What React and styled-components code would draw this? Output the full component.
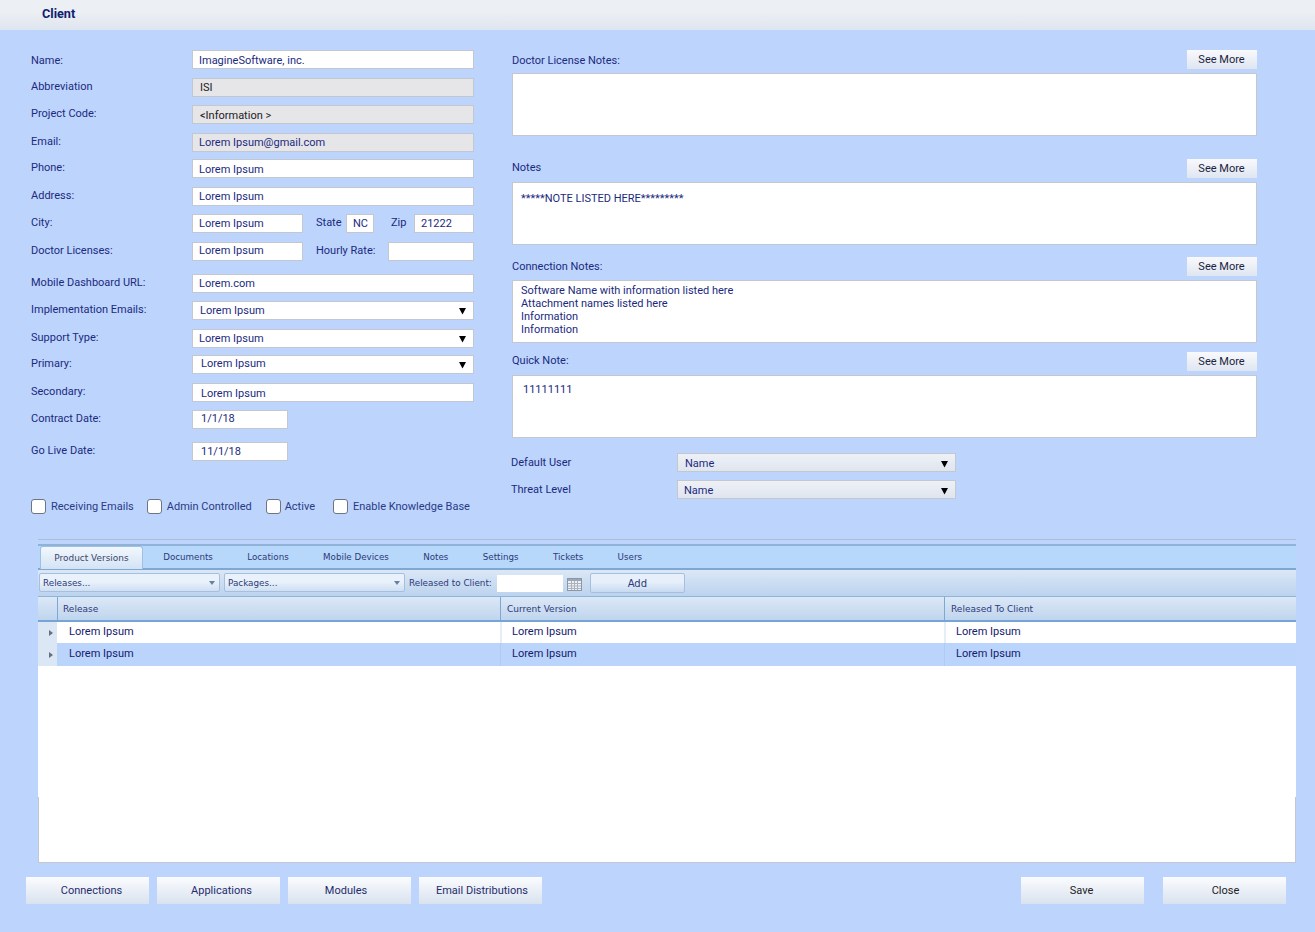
import React from 'react';
import styled, {createGlobalStyle} from 'styled-components';

const GlobalStyle = createGlobalStyle`
  html, body {
    margin: 0;
    padding: 0;
    background: #bdd4fd;
  }
  * {
    box-sizing: border-box;
  }
`;

const navy = '#1b2a7e';
const line = '#c3c7cf';

// shifts centered text up by the given number of pixels
const riseTop = (n = 0) => (n === 0 ? '1px' : '0');
const riseBottom = (n = 0) => (n === 0 ? '0' : `${2 * n - 1}px`);

const Page = styled.div`
  width: 1315px;
  height: 932px;
  overflow: hidden;
  background: #bdd4fd;
  font-family: Roboto, 'Liberation Sans', sans-serif;
  font-size: 11px;
  color: ${navy};
`;

const Header = styled.header`
  height: 30px;
  padding: 6px 0 0 42px;
  background: linear-gradient(#eceff3 0%, #eceff3 40%, #dfe6f0 100%);
  font-size: 12.7px;
  font-weight: 700;
  line-height: 15px;
  color: #101f70;
`;

const Columns = styled.div`
  display: flex;
  gap: 38px;
  padding: 20px 0 0 31px;
`;

const LeftColumn = styled.section`
  width: 443px;
`;

const RightColumn = styled.section`
  width: 745px;
`;

const FormRow = styled.div`
  display: flex;
  align-items: flex-start;
  height: 19px;
  margin-top: ${(p) => p.$top || 0}px;
`;

const Label = styled.label`
  flex: none;
  width: ${(p) => p.$width || 161}px;
  margin-top: ${(p) => p.$dy || 0}px;
  margin-left: ${(p) => p.$left || 0}px;
  line-height: 19px;
  white-space: nowrap;
`;

const Input = styled.input`
  display: block;
  flex: none;
  width: ${(p) => p.$width || 282}px;
  height: 19px;
  margin: 0;
  padding: ${(p) => riseTop(p.$rise)} 0 ${(p) => riseBottom(p.$rise)} ${(p) => p.$pad || 6}px;
  border: 1px solid ${line};
  border-radius: 0;
  background: ${(p) => (p.$disabled ? '#e6e5e8' : '#fff')};
  font: inherit;
  color: ${(p) => p.$ink || navy};
  outline: none;
`;

const SelectBox = styled.div`
  display: flex;
  align-items: center;
  justify-content: space-between;
  flex: none;
  width: ${(p) => p.$width || 282}px;
  height: 19px;
  padding: ${(p) => riseTop(p.$rise)} 6px ${(p) => riseBottom(p.$rise)} ${(p) => p.$pad || 7}px;
  border: 1px solid ${line};
  background: ${(p) => (p.$soft ? 'linear-gradient(#eef1f6, #dfe5ef)' : '#fff')};
`;

const ArrowSvg = styled.svg`
  flex: none;
  margin-top: ${(p) => p.$top}px;
`;

const Select = ({children, ...rest}) => (
  <SelectBox {...rest}>
    <span>{children}</span>
    <ArrowSvg $top={rest.$rise ? 2 * rest.$rise : 1} width="9" height="8" viewBox="0 0 9 8" aria-hidden="true">
      <path d="M1 1h7L4.5 7.5z" fill="#000" />
    </ArrowSvg>
  </SelectBox>
);

const CheckRow = styled.div`
  display: flex;
  align-items: center;
  height: 16px;
  margin-top: 37px;
  white-space: nowrap;
`;

const CheckItem = styled.label`
  display: flex;
  align-items: center;
  gap: ${(p) => p.$inner || 5}px;
  margin-right: ${(p) => p.$gap}px;
  color: #2a3a86;
`;

const CheckBox = styled.span`
  display: block;
  width: 15px;
  height: 15px;
  border: 1px solid #6f7480;
  border-radius: 3px;
  background: #fff;
`;

const NoteHead = styled.div`
  display: flex;
  align-items: center;
  justify-content: space-between;
  height: 19px;
  margin-top: ${(p) => p.$top || 0}px;
`;

const NoteLabel = styled.span`
  padding-top: ${(p) => p.$down || 0}px;
  padding-bottom: ${(p) => p.$up || 0}px;
`;

const SeeMore = styled.button`
  width: 70px;
  height: 19px;
  padding: 0 1px 0 0;
  border: 0;
  background: linear-gradient(#f8f9fc, #dfe6f1);
  font: inherit;
  color: #1c2440;
`;

const NoteBox = styled.div`
  height: 63px;
  margin-top: 4px;
  padding: ${(p) => p.$pad || '9px 8px 0'};
  border: 1px solid ${line};
  background: #fff;
  line-height: 13px;
  white-space: pre-line;
`;

const PickRow = styled.div`
  display: flex;
  align-items: center;
  height: 19px;
  margin: ${(p) => p.$top}px 0 0 -1px;
`;

const PickLabel = styled.span`
  width: 166px;
  padding-bottom: 1px;
`;

const Divider = styled.div`
  height: 1px;
  margin: 25px 19px 0 38px;
  background: #aebdd6;
`;

const Panel = styled.section`
  width: 1258px;
  margin: 4px 0 0 38px;
  font-family: 'DejaVu Sans', Tahoma, sans-serif;
  font-size: 8.8px;
  color: #2c3a78;
`;

const TabStrip = styled.nav`
  display: flex;
  align-items: flex-end;
  height: 26px;
  padding-left: 2px;
  border-top: 2px solid #8fb2d8;
  border-bottom: 2px solid #7ea8d2;
  background: #b7d7fb;
  font-size: 8.72px;
`;

const Tab = styled.div`
  display: flex;
  align-items: center;
  justify-content: center;
  height: 23px;
  margin-bottom: -1px;
  padding: 0 17.2px 1px;
  ${(p) =>
    p.$active &&
    `
    width: 103px;
    margin-right: 3px;
    padding: 0 0 1px;
    border: 1px solid #9ec0e2;
    border-bottom: 0;
    border-radius: 3px 3px 0 0;
    background: linear-gradient(#f2f7fd, #d3e3f5);
    color: #3a4668;
    font-size: 8.95px;
  `}
`;

const Toolbar = styled.div`
  display: flex;
  align-items: center;
  height: 27px;
  padding-left: 1px;
  border-bottom: 1px solid #8fb4da;
  background: linear-gradient(#dbe7f6, #bcd3ee);
`;

const Combo = styled.div`
  display: flex;
  align-items: center;
  justify-content: space-between;
  width: 181px;
  height: 19px;
  margin: 0 4px 2px 0;
  padding: 1px 4px 0 3px;
  border: 1px solid #a5c0de;
  border-radius: 2px;
  background: linear-gradient(#e9f1fb 45%, #cfdff2);
`;

const ComboCaret = styled.span`
  width: 0;
  height: 0;
  border-left: 3.5px solid transparent;
  border-right: 3.5px solid transparent;
  border-top: 4px solid #6a80a3;
`;

const ToolLabel = styled.span`
  padding-bottom: 1px;
  white-space: nowrap;
`;

const DateInput = styled.div`
  width: 66px;
  height: 17px;
  margin: 1px 0 0 5px;
  background: #fff;
`;

const CalendarSvg = styled.svg`
  flex: none;
  margin: 2px 8px 0 4px;
`;

const CalendarIcon = () => (
  <CalendarSvg width="15" height="13" viewBox="0 0 15 13" aria-hidden="true">
    <rect x="0.5" y="0.5" width="14" height="12" fill="#eef1f4" stroke="#8b97a5" />
    <rect x="1" y="1" width="13" height="2" fill="#9aa7b5" />
    <path d="M4.5 3v9M7.5 3v9M10.5 3v9M1 5.5h13M1 8h13M1 10.5h13" stroke="#a9b3bf" strokeWidth="1" />
  </CalendarSvg>
);

const AddButton = styled.button`
  width: 95px;
  height: 20px;
  padding: 1px 0 0;
  border: 1px solid #a5c0de;
  border-radius: 2px;
  background: linear-gradient(#e6effa 45%, #c8daf0);
  font: inherit;
  font-size: 10px;
  color: #2c3a78;
`;

const GridRow = styled.div`
  display: grid;
  grid-template-columns: 19px 443px 444px 1fr;
`;

const HeadRow = styled(GridRow)`
  height: 25px;
  border-bottom: 2px solid #75a5d6;
  background: linear-gradient(#dce8f6, #bfd5ee);
  font-size: 9px;
`;

const HeadCell = styled.div`
  display: flex;
  align-items: center;
  padding-left: ${(p) => p.$pad || 6}px;
  border-left: 1px solid #7ea8d2;
`;

const DataRow = styled(GridRow)`
  height: ${(p) => p.$height}px;
  background: ${(p) => (p.$alt ? '#bad4fb' : '#fff')};
  font-family: Roboto, 'Liberation Sans', sans-serif;
  font-size: 11px;
  color: #14206e;
`;

const Gutter = styled.div`
  display: flex;
  align-items: center;
  justify-content: center;
  padding-left: 6px;
  background: #dbe7f5;
`;

const RowCaret = styled.span`
  width: 0;
  height: 0;
  border-top: 3px solid transparent;
  border-bottom: 3px solid transparent;
  border-left: 4px solid #65707f;
`;

const DataCell = styled.div`
  padding: ${(p) => (p.$alt ? 3 : 2)}px 0 0 ${(p) => p.$pad}px;
  border-left: ${(p) => (p.$plain ? 0 : p.$alt ? '1px solid #b0caf0' : '2px solid #e6edf6')};
  line-height: 15px;
`;

const GridBody = styled.div`
  height: 131px;
  background: #fff;
`;

const LowerBox = styled.div`
  height: 66px;
  border: 1px solid ${line};
  border-top: 0;
  background: #fff;
`;

const Footer = styled.footer`
  display: flex;
  justify-content: space-between;
  margin-top: 14px;
  padding: 0 29px 0 26px;
`;

const ButtonGroup = styled.div`
  display: flex;
  gap: ${(p) => p.$gap}px;
`;

const FooterButton = styled.button`
  width: 123px;
  height: 27px;
  padding: 0 ${(p) => (p.$nudge < 0 ? -2 * p.$nudge : 0)}px 0 ${(p) => (p.$nudge > 0 ? 2 * p.$nudge : 0)}px;
  border: 0;
  background: linear-gradient(#fbfcfe, #d9e2ef);
  font: inherit;
  color: ${(p) => p.$ink || '#1f2c6c'};
`;

const rows = [
  {id: 1, height: 21},
  {id: 2, height: 23, alt: true},
];

const App = () => (
  <Page>
    <GlobalStyle />
    <Header>Client</Header>
    <Columns>
      <LeftColumn>
        <FormRow>
          <Label $dy={1}>Name:</Label>
          <Input readOnly defaultValue="ImagineSoftware, inc." />
        </FormRow>
        <FormRow $top={9}>
          <Label $dy={-1}>Abbreviation</Label>
          <Input readOnly $disabled $rise={1} $pad={7} $ink="#222" defaultValue="ISI" />
        </FormRow>
        <FormRow $top={8}>
          <Label $dy={-1}>Project Code:</Label>
          <Input readOnly $disabled $pad={7} $ink="#222" defaultValue="<Information >" />
        </FormRow>
        <FormRow $top={9}>
          <Label $dy={-1}>Email:</Label>
          <Input readOnly $disabled $rise={1} defaultValue="Lorem Ipsum@gmail.com" />
        </FormRow>
        <FormRow $top={7}>
          <Label $dy={-1}>Phone:</Label>
          <Input readOnly defaultValue="Lorem Ipsum" />
        </FormRow>
        <FormRow $top={9}>
          <Label $dy={-1}>Address:</Label>
          <Input readOnly $rise={1} defaultValue="Lorem Ipsum" />
        </FormRow>
        <FormRow $top={8}>
          <Label $dy={-1}>City:</Label>
          <Input readOnly $rise={1} $width={111} defaultValue="Lorem Ipsum" />
          <Label $width={30} $left={13} $dy={-1}>State</Label>
          <Input readOnly $rise={1} $width={28} $pad={6} defaultValue="NC" />
          <Label $width={23} $left={17} $dy={-1}>Zip</Label>
          <Input readOnly $rise={1} $width={60} defaultValue="21222" />
        </FormRow>
        <FormRow $top={9}>
          <Label $dy={-1}>Doctor Licenses:</Label>
          <Input readOnly $rise={2} $width={111} defaultValue="Lorem Ipsum" />
          <Label $width={72} $left={13} $dy={-1}>Hourly Rate:</Label>
          <Input readOnly $width={86} />
        </FormRow>
        <FormRow $top={13}>
          <Label $dy={-1}>Mobile Dashboard URL:</Label>
          <Input readOnly $rise={1} defaultValue="Lorem.com" />
        </FormRow>
        <FormRow $top={8}>
          <Label $dy={-1}>Implementation Emails:</Label>
          <Select $rise={1}>Lorem Ipsum</Select>
        </FormRow>
        <FormRow $top={9}>
          <Label $dy={-1}>Support Type:</Label>
          <Select $rise={1} $pad={6}>Lorem Ipsum</Select>
        </FormRow>
        <FormRow $top={7}>
          <Label $dy={-1}>Primary:</Label>
          <Select $rise={2} $pad={8}>Lorem Ipsum</Select>
        </FormRow>
        <FormRow $top={9}>
          <Label $dy={-1}>Secondary:</Label>
          <Input readOnly $pad={8} defaultValue="Lorem Ipsum" />
        </FormRow>
        <FormRow $top={8}>
          <Label $dy={-1}>Contract Date:</Label>
          <Input readOnly $rise={2} $width={96} $pad={8} defaultValue="1/1/18" />
        </FormRow>
        <FormRow $top={13}>
          <Label $dy={-1}>Go Live Date:</Label>
          <Input readOnly $rise={1} $width={96} $pad={8} defaultValue="11/1/18" />
        </FormRow>
        <CheckRow>
          <CheckItem $gap={13}><CheckBox />Receiving Emails</CheckItem>
          <CheckItem $gap={14}><CheckBox />Admin Controlled</CheckItem>
          <CheckItem $gap={18} $inner={4}><CheckBox />Active</CheckItem>
          <CheckItem $gap={0}><CheckBox />Enable Knowledge Base</CheckItem>
        </CheckRow>
      </LeftColumn>

      <RightColumn>
        <NoteHead>
          <NoteLabel $down={2}>Doctor License Notes:</NoteLabel>
          <SeeMore>See More</SeeMore>
        </NoteHead>
        <NoteBox />
        <NoteHead $top={23}>
          <NoteLabel $up={2}>Notes</NoteLabel>
          <SeeMore>See More</SeeMore>
        </NoteHead>
        <NoteBox>*****NOTE LISTED HERE*********</NoteBox>
        <NoteHead $top={12}>
          <NoteLabel>Connection Notes:</NoteLabel>
          <SeeMore>See More</SeeMore>
        </NoteHead>
        <NoteBox $pad="3px 8px 0">
          {'Software Name with information listed here\nAttachment names listed here\nInformation\nInformation'}
        </NoteBox>
        <NoteHead $top={9}>
          <NoteLabel $up={2}>Quick Note:</NoteLabel>
          <SeeMore>See More</SeeMore>
        </NoteHead>
        <NoteBox $pad="7px 10px 0">11111111</NoteBox>
        <PickRow $top={15}>
          <PickLabel>Default User</PickLabel>
          <Select $soft $width={279}>Name</Select>
        </PickRow>
        <PickRow $top={8}>
          <PickLabel>Threat Level</PickLabel>
          <Select $soft $width={279} $pad={6}>Name</Select>
        </PickRow>
      </RightColumn>
    </Columns>

    <Divider />

    <Panel>
      <TabStrip>
        <Tab $active>Product Versions</Tab>
        <Tab>Documents</Tab>
        <Tab>Locations</Tab>
        <Tab>Mobile Devices</Tab>
        <Tab>Notes</Tab>
        <Tab>Settings</Tab>
        <Tab>Tickets</Tab>
        <Tab>Users</Tab>
      </TabStrip>
      <Toolbar>
        <Combo>Releases...<ComboCaret /></Combo>
        <Combo>Packages...<ComboCaret /></Combo>
        <ToolLabel>Released to Client:</ToolLabel>
        <DateInput />
        <CalendarIcon />
        <AddButton>Add</AddButton>
      </Toolbar>
      <HeadRow>
        <div />
        <HeadCell $pad={5}>Release</HeadCell>
        <HeadCell>Current Version</HeadCell>
        <HeadCell>Released To Client</HeadCell>
      </HeadRow>
      {rows.map((row) => (
        <DataRow key={row.id} $height={row.height} $alt={row.alt}>
          <Gutter><RowCaret /></Gutter>
          <DataCell $plain $alt={row.alt} $pad={12}>Lorem Ipsum</DataCell>
          <DataCell $alt={row.alt} $pad={row.alt ? 11 : 10}>Lorem Ipsum</DataCell>
          <DataCell $alt={row.alt} $pad={row.alt ? 11 : 10}>Lorem Ipsum</DataCell>
        </DataRow>
      ))}
      <GridBody />
      <LowerBox />
    </Panel>

    <Footer>
      <ButtonGroup $gap={8}>
        <FooterButton $nudge={4}>Connections</FooterButton>
        <FooterButton $nudge={3}>Applications</FooterButton>
        <FooterButton $nudge={-3.5}>Modules</FooterButton>
        <FooterButton $nudge={1.5}>Email Distributions</FooterButton>
      </ButtonGroup>
      <ButtonGroup $gap={19}>
        <FooterButton $nudge={-1} $ink="#222">Save</FooterButton>
        <FooterButton $nudge={1} $ink="#222">Close</FooterButton>
      </ButtonGroup>
    </Footer>
  </Page>
);

export default App;
